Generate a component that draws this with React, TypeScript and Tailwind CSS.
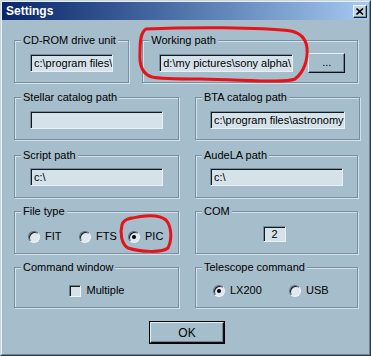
import React from "react";

const FACE = "bg-[#a6bdcb]";

function Group({
  label,
  className,
  children,
}: {
  label: string;
  className?: string;
  children?: React.ReactNode;
}) {
  return (
    <fieldset
      className={`border border-[#7990a1] shadow-[inset_1px_1px_0_#d5e1e9,1px_1px_0_#d5e1e9] ${className ?? ""}`}
    >
      <legend className={`ml-[6px] px-[2px] leading-[13px] ${FACE}`}>{label}</legend>
      {children}
    </fieldset>
  );
}

function Field({ value, className }: { value: string; className?: string }) {
  return (
    <div
      className={`h-[18px] bg-[#d6e2ea] border border-t-[#7a8f9e] border-l-[#7a8f9e] border-r-[#e8f0f4] border-b-[#e8f0f4] shadow-[inset_1px_1px_0_#101820] flex items-center pl-[3px] overflow-hidden whitespace-nowrap ${className ?? ""}`}
    >
      {value}
    </div>
  );
}

function Radio({ checked, label, className }: { checked?: boolean; label: string; className?: string }) {
  return (
    <div className={`flex items-center gap-[5px] ${className ?? ""}`}>
      <span className="w-[12px] h-[12px] rounded-full bg-[#dfe8ee] border border-t-[#5a6e7c] border-l-[#5a6e7c] border-r-[#eef4f7] border-b-[#eef4f7] shadow-[inset_1px_1px_0_#1a1a1a] flex items-center justify-center">
        {checked && <span className="w-[4px] h-[4px] rounded-full bg-black" />}
      </span>
      <span className="leading-[13px]">{label}</span>
    </div>
  );
}

export default function App() {
  return (
    <div
      className={`relative w-[371px] h-[356px] ${FACE} border border-t-[#c9d7e1] border-l-[#c9d7e1] border-r-[#2c3a44] border-b-[#2c3a44] text-[11px] text-black`}
      style={{ fontFamily: '"Liberation Sans", Arial, sans-serif' }}
    >
      <div className="h-full border border-t-[#e6eef3] border-l-[#e6eef3] border-r-[#6f8696] border-b-[#6f8696] flex flex-col">
        {/* Title bar */}
        <div className="h-[18px] bg-linear-to-r from-[#0a246a] to-[#a6caf0] flex items-center justify-between pl-[4px] pr-[2px]">
          <span className="text-white font-bold text-[12px] leading-none">Settings</span>
          <div className="w-[14px] h-[13px] bg-[#c6d4de] border border-t-[#eef4f8] border-l-[#eef4f8] border-r-[#1c252c] border-b-[#1c252c] shadow-[inset_-1px_-1px_0_#7d93a3] flex items-center justify-center">
            <svg width="8" height="7" viewBox="0 0 8 7">
              <path d="M0.5 0.5 L7 6.5 M7 0.5 L0.5 6.5" stroke="#000" strokeWidth="1.6" />
            </svg>
          </div>
        </div>

        {/* Body */}
        <div className="flex-1 flex flex-col pt-[14px] pl-[12px] pr-[11px]">
          {/* Row 1 */}
          <div className="flex gap-[13px]">
            <Group label="CD-ROM drive unit" className="w-[113px] h-[49px]">
              <div className="px-[15px] pt-[7px]">
                <Field value="c:\program files\" />
              </div>
            </Group>
            <Group label="Working path" className="w-[218px] h-[49px]">
              <div className="flex items-start pl-[16px] pt-[7px]">
                <Field value="d:\my pictures\sony alpha\" className="w-[134px]" />
                <div className="ml-[15px] -mt-[1px] w-[37px] h-[20px] bg-[#a6bdcb] border border-t-[#e4edf2] border-l-[#e4edf2] border-r-[#111] border-b-[#111] shadow-[inset_-1px_-1px_0_#6f8595] flex items-center justify-center leading-none pb-[1px]">
                  ...
                </div>
              </div>
            </Group>
          </div>

          {/* Row 2 */}
          <div className="grid grid-cols-[165px_163px] gap-x-[16px] mt-[8px]">
            <Group label="Stellar catalog path" className="h-[49px]">
              <div className="px-[15px] pt-[7px]">
                <Field value="" />
              </div>
            </Group>
            <Group label="BTA catalog path" className="h-[49px]">
              <div className="px-[14px] pt-[7px]">
                <Field value="c:\program files\astronomy" />
              </div>
            </Group>
          </div>

          {/* Row 3 */}
          <div className="grid grid-cols-[165px_163px] gap-x-[16px] mt-[9px]">
            <Group label="Script path" className="h-[49px]">
              <div className="px-[15px] pt-[6px]">
                <Field value="c:\" />
              </div>
            </Group>
            <Group label="AudeLA path" className="h-[49px]">
              <div className="px-[14px] pt-[6px]">
                <Field value="c:\" />
              </div>
            </Group>
          </div>

          {/* Row 4 */}
          <div className="grid grid-cols-[165px_163px] gap-x-[16px] mt-[7px]">
            <Group label="File type" className="h-[49px]">
              <div className="flex pl-[13px] pt-[12px]">
                <Radio label="FIT" className="w-[51px]" />
                <Radio label="FTS" className="w-[49px]" />
                <Radio label="PIC" checked />
              </div>
            </Group>
            <Group label="COM" className="h-[49px]">
              <div className="flex justify-center pt-[8px] pr-[4px]">
                <div className="w-[23px] h-[16px] bg-[#d6e2ea] border border-t-[#7a8f9e] border-l-[#7a8f9e] border-r-[#e8f0f4] border-b-[#e8f0f4] shadow-[inset_1px_1px_0_#101820] flex items-center justify-center leading-none">
                  2
                </div>
              </div>
            </Group>
          </div>

          {/* Row 5 */}
          <div className="grid grid-cols-[165px_163px] gap-x-[16px] mt-[7px]">
            <Group label="Command window" className="h-[47px]">
              <div className="flex justify-center items-center gap-[6px] pt-[10px]">
                <span className="w-[12px] h-[12px] bg-[#d6e2ea] border border-t-[#6a7f8e] border-l-[#6a7f8e] border-r-[#eef4f7] border-b-[#eef4f7] shadow-[inset_1px_1px_0_#1a1a1a]" />
                <span className="leading-[13px]">Multiple</span>
              </div>
            </Group>
            <Group label="Telescope command" className="h-[47px]">
              <div className="flex pl-[17px] pt-[10px]">
                <Radio label="LX200" checked className="w-[76px]" />
                <Radio label="USB" />
              </div>
            </Group>
          </div>

          {/* OK button */}
          <div className="flex justify-center mt-[13px] pl-[2px]">
            <div className="w-[76px] h-[23px] border border-black">
              <div className="h-full border border-t-[#e4edf2] border-l-[#e4edf2] border-r-[#111] border-b-[#111] shadow-[inset_-1px_-1px_0_#6f8595] flex items-center justify-center text-[12px]">
                OK
              </div>
            </div>
          </div>
        </div>
      </div>

      {/* Red hand-drawn annotations */}
      <svg
        className="absolute left-[-1px] top-[-1px] pointer-events-none"
        width="371"
        height="356"
        viewBox="0 0 371 356"
      >
        <path
          d="M 146 29 C 190 27, 260 27, 291 31 C 300 33, 306 38, 307 48 C 308 60, 304 72, 295 79 C 285 83, 250 80, 200 79 C 180 79, 160 79, 152 77 C 142 74, 139 65, 140 52 C 140 40, 141 32, 146 29 Z"
          fill="none"
          stroke="#e5141b"
          strokeWidth="3"
          strokeLinejoin="round"
        />
        <path
          d="M 128 219 C 140 216, 158 213, 166 220 C 172 227, 172 240, 168 248 C 162 253, 140 252, 128 248 C 121 244, 120 232, 122 225 C 123 221, 126 219, 131 218"
          fill="none"
          stroke="#e5141b"
          strokeWidth="3"
          strokeLinecap="round"
        />
      </svg>
    </div>
  );
}
